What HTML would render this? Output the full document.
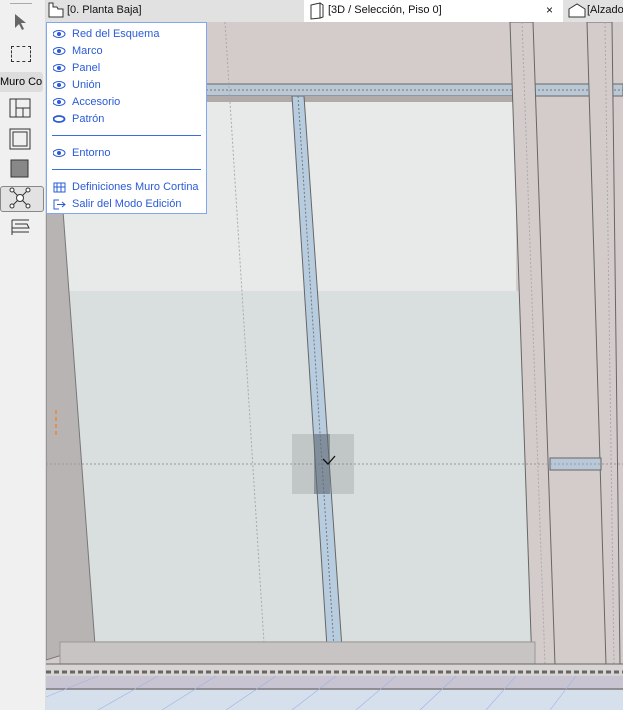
<!DOCTYPE html>
<html><head><meta charset="utf-8"><style>
body{margin:0;width:623px;height:710px;overflow:hidden;position:relative;font-family:"Liberation Sans",sans-serif;background:#f0f0f0}
.tb{position:absolute;left:0;top:0;width:45px;height:710px;background:#f0f0f0;border-right:1px solid #dcdcdc}
.tabs{position:absolute;left:46px;top:0;width:577px;height:22px;background:#e1e1e1;font-size:11px;color:#111}
.menu{position:absolute;left:46px;top:22px;width:159px;height:190px;background:#fff;border:1px solid #7fa8f0;font-size:11px;color:#2a5bd7}
.menu div.i{position:absolute;left:25px;height:14px;line-height:14px}
.menu svg{position:absolute;left:-19px;top:2px}
.sep{position:absolute;left:5px;width:149px;height:1px;background:#3a6fd8}
</style></head><body>
<svg width="623" height="710" style="position:absolute;left:0;top:0">
<rect x="46" y="22" width="577" height="688" fill="#d4cccb"/>
<rect x="46" y="102" width="470" height="190" fill="#e8eae9"/>
<rect x="46" y="291" width="490" height="350" fill="#d9dfde"/>
<!-- left slab -->
<polygon points="46,102 55,102 95,645 46,660" fill="#b8b4b3" stroke="#777" stroke-width="1"/>
<!-- beam -->
<rect x="46" y="84" width="577" height="12" fill="#bac8d6" stroke="#666" stroke-width="1"/>
<line x1="46" y1="90" x2="623" y2="90" stroke="#777" stroke-dasharray="2,2"/>
<rect x="46" y="96" width="470" height="6" fill="#b0aaa9"/>
<!-- right columns -->
<polygon points="510,22 533,22 555,665 532,665" fill="#d4cccb" stroke="#666"/>
<polygon points="587,22 612,22 620,665 606,665" fill="#d4cccb" stroke="#666"/>
<line x1="522" y1="22" x2="545" y2="665" stroke="#aaa" stroke-dasharray="2,2"/>
<line x1="605" y1="22" x2="614" y2="665" stroke="#aaa" stroke-dasharray="2,2"/>
<rect x="550" y="458" width="51" height="12" fill="#b8c8d8" stroke="#666"/>
<!-- mullion -->
<polygon points="292,96 304,96 343,663 328,663" fill="#b8cce0" stroke="#666"/>
<line x1="298" y1="96" x2="335" y2="663" stroke="#777" stroke-dasharray="2,2"/>
<!-- grid dashed -->
<line x1="46" y1="464" x2="623" y2="464" stroke="#999" stroke-dasharray="2,2"/>
<line x1="225" y1="22" x2="266" y2="675" stroke="#aaa" stroke-dasharray="2,2"/>
<line x1="136" y1="22" x2="143" y2="120" stroke="#aaa" stroke-dasharray="2,2"/>
<!-- sill -->
<rect x="60" y="642" width="475" height="22" fill="#c8c4c3" stroke="#999"/>
<rect x="46" y="664" width="577" height="24" fill="#d8d4d3"/>
<line x1="46" y1="664" x2="623" y2="664" stroke="#666"/>
<line x1="46" y1="672" x2="623" y2="672" stroke="#666" stroke-width="3" stroke-dasharray="5,3"/>
<rect x="46" y="676" width="577" height="13" fill="#c8c4d2"/>
<line x1="46" y1="689" x2="623" y2="689" stroke="#555"/>
<rect x="46" y="690" width="577" height="20" fill="#d6e0ec"/>
<g stroke="#9bb3e6" stroke-width="0.6">
<line x1="46" y1="697" x2="98" y2="676"/><line x1="98" y1="710" x2="158" y2="676"/><line x1="162" y1="710" x2="216" y2="676"/><line x1="226" y1="710" x2="276" y2="676"/><line x1="292" y1="710" x2="336" y2="676"/><line x1="356" y1="710" x2="396" y2="676"/><line x1="420" y1="710" x2="456" y2="676"/><line x1="486" y1="710" x2="516" y2="676"/><line x1="550" y1="710" x2="576" y2="676"/>
</g>
<!-- selection -->
<rect x="292" y="434" width="62" height="60" fill="#7a7f85" opacity="0.25"/>
<rect x="314" y="434" width="16" height="60" fill="#5a6470" opacity="0.5"/>
<path d="M323,459 L328,464 L335,456" stroke="#111" fill="none" stroke-width="1.3"/>
<line x1="56" y1="410" x2="56" y2="438" stroke="#f08020" stroke-width="1.3" stroke-dasharray="4,3"/>
</svg>
<div class="tb">
<div style="position:absolute;left:10px;top:3px;width:22px;height:1px;background:#aaa"></div>
<svg width="20" height="20" style="position:absolute;left:12px;top:12px"><path d="M3,2 L3,16 L7,12 L10,18 L12,17 L9,11 L14,11 Z" fill="#666"/></svg>
<div style="position:absolute;left:11px;top:46px;width:18px;height:14px;border:1px dashed #333"></div>
<div style="position:absolute;left:0;top:72px;width:43px;height:20px;background:#ddd;border-radius:0 3px 3px 0;font-size:11px;line-height:20px;white-space:nowrap;overflow:hidden">Muro Co</div>
<svg width="24" height="24" style="position:absolute;left:9px;top:98px"><rect x="1" y="1" width="20" height="18" fill="none" stroke="#333"/><path d="M7,1V19M7,10H21M14,10V19" stroke="#333" fill="none"/></svg>
<svg width="24" height="24" style="position:absolute;left:9px;top:128px"><rect x="1" y="1" width="20" height="20" fill="none" stroke="#333"/><rect x="4" y="4" width="14" height="14" fill="none" stroke="#333"/></svg>
<svg width="24" height="24" style="position:absolute;left:9px;top:158px"><rect x="2" y="2" width="17" height="17" fill="#888" stroke="#333"/></svg>
<div style="position:absolute;left:0;top:186px;width:42px;height:24px;background:#e2e2e2;border:1px solid #888;border-radius:3px"></div>
<svg width="24" height="24" style="position:absolute;left:9px;top:187px"><path d="M3,3L19,19M19,3L3,19" stroke="#333"/><circle cx="11" cy="11" r="3.5" fill="#fff" stroke="#333"/><circle cx="3" cy="3" r="2" fill="#fff" stroke="#333"/><circle cx="19" cy="3" r="2" fill="#fff" stroke="#333"/><circle cx="3" cy="19" r="2" fill="#fff" stroke="#333"/><circle cx="19" cy="19" r="2" fill="#fff" stroke="#333"/></svg>
<svg width="24" height="24" style="position:absolute;left:9px;top:216px"><path d="M3,4H20M6,8H18L20,12H3M3,16H20M3,4V19" stroke="#333" fill="none"/></svg>
</div>
<div class="tabs">
<svg width="18" height="16" style="position:absolute;left:2px;top:2px"><path d="M1,1H5V5H9L10,7H15V15H1Z" fill="#fff" stroke="#333"/></svg>
<span style="position:absolute;left:21px;top:4px">[0. Planta Baja]</span>
<div style="position:absolute;left:258px;top:0;width:259px;height:22px;background:#fff"></div>
<svg width="16" height="18" style="position:absolute;left:263px;top:2px"><path d="M2,3L11,1V16L2,17Z" fill="#fff" stroke="#333"/><path d="M11,1L14,3V15L11,16" fill="none" stroke="#333"/></svg>
<span style="position:absolute;left:282px;top:4px">[3D / Selección, Piso 0]</span>
<span style="position:absolute;left:500px;top:3px;font-size:12px">×</span>
<svg width="18" height="16" style="position:absolute;left:522px;top:3px"><path d="M1,6L9,1L17,6V14H1Z" fill="#fff" stroke="#333"/></svg>
<span style="position:absolute;left:541px;top:4px">[Alzado</span>
</div>
<div class="menu">
<div class="i" style="top:4px"><svg width="14" height="10"><ellipse cx="6" cy="5" rx="6" ry="3.5" fill="none" stroke="#2a5bd7"/><circle cx="6" cy="5" r="2" fill="#2a5bd7"/></svg>Red del Esquema</div>
<div class="i" style="top:21px"><svg width="14" height="10"><ellipse cx="6" cy="5" rx="6" ry="3.5" fill="none" stroke="#2a5bd7"/><circle cx="6" cy="5" r="2" fill="#2a5bd7"/></svg>Marco</div>
<div class="i" style="top:38px"><svg width="14" height="10"><ellipse cx="6" cy="5" rx="6" ry="3.5" fill="none" stroke="#2a5bd7"/><circle cx="6" cy="5" r="2" fill="#2a5bd7"/></svg>Panel</div>
<div class="i" style="top:55px"><svg width="14" height="10"><ellipse cx="6" cy="5" rx="6" ry="3.5" fill="none" stroke="#2a5bd7"/><circle cx="6" cy="5" r="2" fill="#2a5bd7"/></svg>Unión</div>
<div class="i" style="top:72px"><svg width="14" height="10"><ellipse cx="6" cy="5" rx="6" ry="3.5" fill="none" stroke="#2a5bd7"/><circle cx="6" cy="5" r="2" fill="#2a5bd7"/></svg>Accesorio</div>
<div class="i" style="top:89px"><svg width="14" height="10"><ellipse cx="6" cy="5" rx="5.5" ry="3" fill="none" stroke="#2a5bd7" stroke-width="1.8"/></svg>Patrón</div>
<div class="sep" style="top:112px"></div>
<div class="i" style="top:123px"><svg width="14" height="10"><ellipse cx="6" cy="5" rx="6" ry="3.5" fill="none" stroke="#2a5bd7"/><circle cx="6" cy="5" r="2" fill="#2a5bd7"/></svg>Entorno</div>
<div class="sep" style="top:146px"></div>
<div class="i" style="top:157px"><svg width="14" height="12"><rect x="1" y="1" width="11" height="9" fill="none" stroke="#2a5bd7"/><path d="M4,1V10M8,1V10M1,5H12" stroke="#2a5bd7"/></svg>Definiciones Muro Cortina</div>
<div class="i" style="top:174px"><svg width="14" height="12"><path d="M6,1H1V10H6M4,5.5H12M9,3L12,5.5L9,8" fill="none" stroke="#2a5bd7"/></svg>Salir del Modo Edición</div>
</div>
</body></html>
